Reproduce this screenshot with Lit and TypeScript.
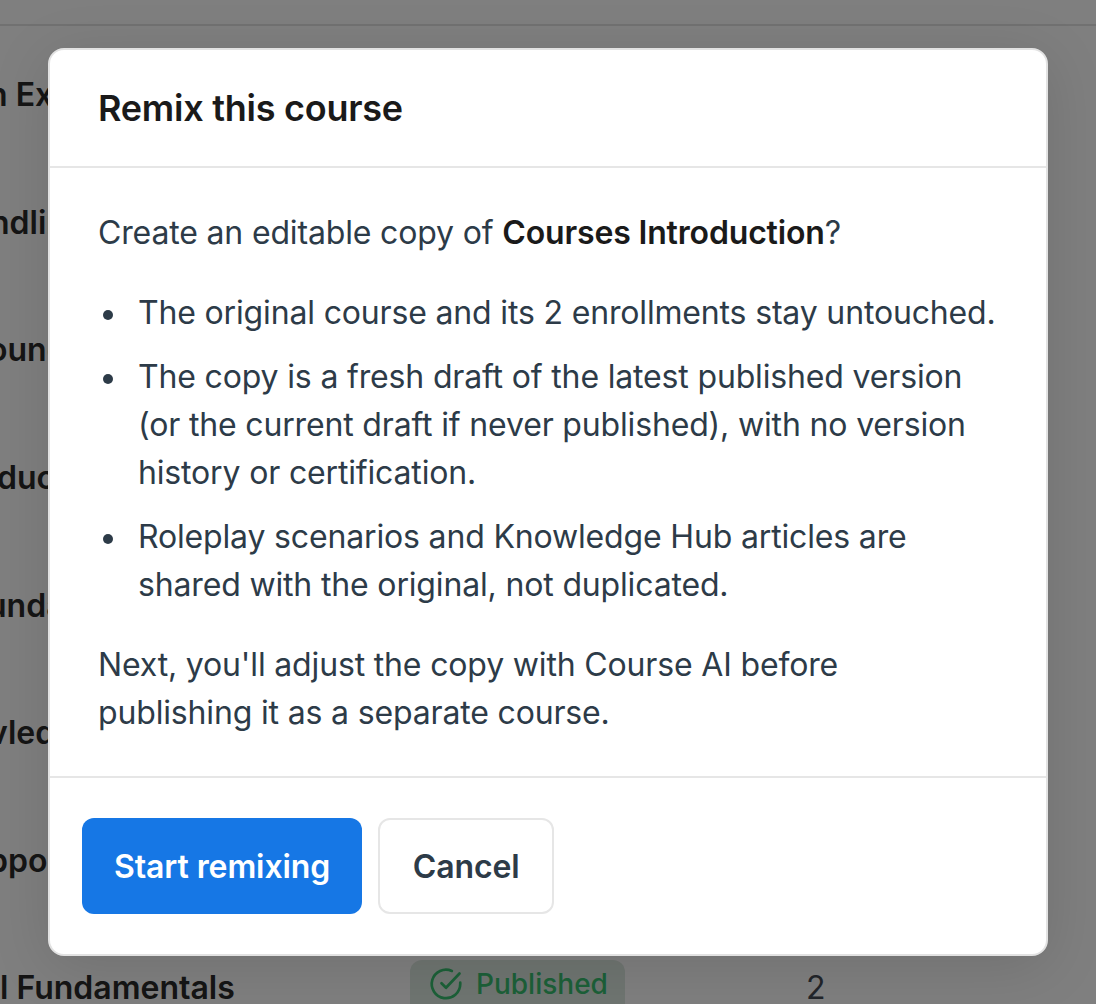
import { LitElement, html, css } from "lit";
import { customElement } from "lit/decorators.js";

const rows = [
  { t: "n Ex", x: -12 },
  { t: "ndlin", x: -10 },
  { t: "ound", x: -12 },
  { t: "duc", x: -3 },
  { t: "unda", x: -13 },
  { t: "vled", x: -11 },
  { t: "ppo", x: -12 },
];

@customElement("app-root")
export class AppRoot extends LitElement {
  static styles = css`
    :host { display: block; width: 1096px; height: 1004px; overflow: hidden; position: relative; background: #fff; font-family: Inter, "Liberation Sans", sans-serif; }
    .page { height: 1004px; overflow: hidden; display: flex; flex-direction: column; }
    .topbar { height: 24px; flex: none; border-bottom: 2px solid #e2e2e2; }
    .table { display: flex; flex-direction: column; padding-top: 5px; }
    .row { height: 127.6px; flex: none; display: flex; align-items: center; font-size: 32px; font-weight: 600; color: #2a2a2a; white-space: nowrap; }
    .name { width: 410px; flex: none; }
    .badge { display: flex; align-items: center; gap: 12px; width: 215px; height: 48px; margin-bottom: 8px; padding: 0 0 0 18px; box-sizing: border-box; background: #dfeae3; border-radius: 12px 12px 0 0; color: #38c070; font-size: 28px; font-weight: 500; }
    .badge svg { width: 36px; height: 36px; flex: none; }
    .count { margin-left: 181px; font-weight: 400; font-size: 32px; color: #454b54; }
    .overlay { position: absolute; inset: 0; background: rgba(0, 0, 0, 0.5); display: flex; align-items: flex-start; justify-content: center; padding-top: 48px; box-sizing: border-box; }
    .modal { width: 1000px; height: 908px; box-sizing: border-box; background: #fff; border: 2px solid #e2e2e2; border-radius: 16px; box-shadow: 0 10px 60px rgba(0, 0, 0, 0.12); display: flex; flex-direction: column; }
    .head { height: 118px; flex: none; box-sizing: border-box; display: flex; align-items: center; padding: 0 48px; border-bottom: 2px solid #e6e6e6; }
    h2 { margin: 0; font-size: 36px; font-weight: 600; letter-spacing: -0.25px; color: #1a1a1a; }
    .body { flex: 1; padding: 41px 48px 0; font-size: 32px; line-height: 48px; letter-spacing: -0.16px; color: #2d3b48; }
    p { margin: 0; }
    strong { font-weight: 600; color: #1a1a1a; }
    ul { margin: 32px 0; padding: 0 0 0 40px; list-style: none; display: flex; flex-direction: column; gap: 16px; }
    li { position: relative; }
    li::before { content: ""; position: absolute; left: -35px; top: 21px; width: 10px; height: 10px; border-radius: 50%; background: #2d3b48; }
    .foot { height: 178px; flex: none; box-sizing: border-box; border-top: 2px solid #e6e6e6; padding: 40px 32px; display: flex; gap: 16px; }
    button { height: 96px; box-sizing: border-box; padding: 0 32px; border-radius: 12px; font: 600 32px Inter, "Liberation Sans", sans-serif; letter-spacing: -0.1px; }
    .primary { background: #1677e5; color: #fff; border: 0; }
    .secondary { background: #fff; color: #2d3b48; border: 2px solid #e6e6e6; padding: 0 32.5px; }
  `;

  render() {
    return html`
      <div class="page">
        <div class="topbar"></div>
        <div class="table">
          ${rows.map((r) => html`<div class="row"><div style="margin-left:${r.x}px">${r.t}</div></div>`)}
          <div class="row">
            <div class="name">l Fundamentals</div>
            <div class="badge">
              <svg viewBox="0 0 24 24" fill="none" stroke="currentColor" stroke-width="1.8" stroke-linecap="round" stroke-linejoin="round"><path d="M21.5 11.1V12a9.5 9.5 0 1 1-5.6-8.7"/><path d="M21 5 12 14.5l-3-3"/></svg>
              Published
            </div>
            <div class="count">2</div>
          </div>
        </div>
      </div>
      <div class="overlay">
        <div class="modal">
          <div class="head"><h2>Remix this course</h2></div>
          <div class="body">
            <p>Create an editable copy of <strong>Courses Introduction</strong>?</p>
            <ul>
              <li>The original course and its 2 enrollments stay untouched.</li>
              <li>The copy is a fresh draft of the latest published version (or the current draft if never published), with no version history or certification.</li>
              <li>Roleplay scenarios and Knowledge Hub articles are shared with the original, not duplicated.</li>
            </ul>
            <p>Next, you'll adjust the copy with Course AI before publishing it as a separate course.</p>
          </div>
          <div class="foot">
            <button class="primary">Start remixing</button>
            <button class="secondary">Cancel</button>
          </div>
        </div>
      </div>
    `;
  }
}
